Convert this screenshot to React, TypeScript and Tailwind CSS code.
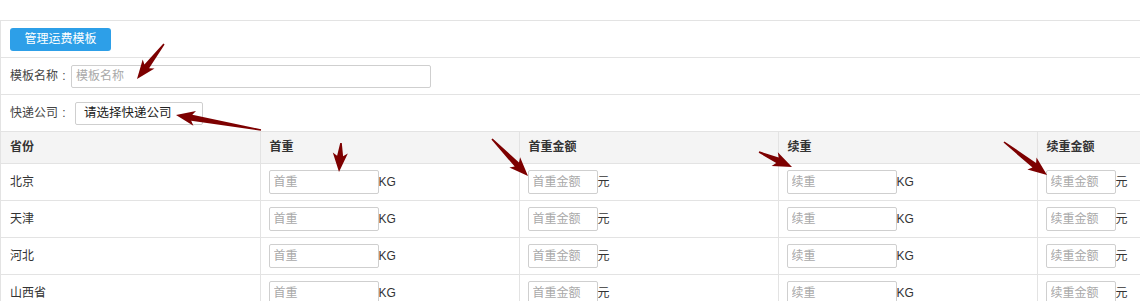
const font = { fontFamily: '"Liberation Sans", "Noto Sans CJK SC", sans-serif' };

const provinces = ["北京", "天津", "河北", "山西省"];

type Arrow = [number, number, number, number];

const arrows: Arrow[] = [
  [164, 44, 137, 79],
  [261, 130, 176, 115],
  [341, 143, 339, 172],
  [492, 139, 528, 176],
  [759, 152, 792, 167],
  [1004, 142, 1047, 175],
];

function arrowPoints([x1, y1, x2, y2]: Arrow) {
  const dx = x2 - x1;
  const dy = y2 - y1;
  const len = Math.hypot(dx, dy);
  const ux = dx / len;
  const uy = dy / len;
  const nx = -uy;
  const ny = ux;
  const headLen = 16;
  const headW = 15;
  const shaftW = 6;
  const bx = x2 - ux * headLen;
  const by = y2 - uy * headLen;
  const pts = [
    [x1 + nx * 0.8, y1 + ny * 0.8],
    [bx + nx * (shaftW / 2), by + ny * (shaftW / 2)],
    [bx - ux * 3 + nx * (headW / 2), by - uy * 3 + ny * (headW / 2)],
    [x2, y2],
    [bx - ux * 3 - nx * (headW / 2), by - uy * 3 - ny * (headW / 2)],
    [bx - nx * (shaftW / 2), by - ny * (shaftW / 2)],
    [x1 - nx * 0.8, y1 - ny * 0.8],
  ];
  return pts.map((p) => p.map((v) => v.toFixed(1)).join(",")).join(" ");
}

function CellInput({ placeholder, width, unit }: { placeholder: string; width: string; unit: string }) {
  return (
    <div className="flex items-center -ml-[1px]">
      <input
        placeholder={placeholder}
        className={`${width} h-[24px] border border-[#cfcfcf] rounded-[2px] pl-[4px] text-[12px] text-[#333] placeholder:text-[#a9a9a9] outline-none`}
        style={font}
      />
      <span className="text-[12px] text-[#333]">{unit}</span>
    </div>
  );
}

export default function App() {
  return (
    <div className="relative w-[1140px] h-[301px] overflow-hidden bg-white text-[#333]" style={font}>
      <div className="mt-[20px] w-[1300px] border-t border-l border-[#e3e3e3]">
        {/* toolbar */}
        <div className="h-[37px] flex items-center pl-[9px] border-b border-[#e3e3e3]">
          <button className="w-[101px] h-[23px] rounded-[3px] bg-[#2d9fe8] text-white text-[12px]">
            管理运费模板
          </button>
        </div>

        {/* 模板名称 */}
        <div className="h-[37px] flex items-center pl-[9px] border-b border-[#e3e3e3]">
          <span className="text-[12px] text-[#444]">模板名称</span>
          <span className="text-[12px] w-[12px] text-center text-[#444] mr-[1px]">:</span>
          <input
            placeholder="模板名称"
            className="w-[360px] h-[23px] border border-[#cfcfcf] rounded-[2px] pl-[4px] text-[12px] placeholder:text-[#a9a9a9] outline-none"
            style={font}
          />
        </div>

        {/* 快递公司 */}
        <div className="h-[37px] flex items-center pl-[9px] border-b border-[#e3e3e3]">
          <span className="text-[12px] text-[#444]">快递公司</span>
          <span className="text-[12px] w-[12px] text-center text-[#444] mr-[5px]">:</span>
          <div className="w-[128px] h-[23px] border border-[#cfcfcf] rounded-[2px] pl-[8px] flex items-center text-[12.5px] text-[#222]">
            请选择快递公司
          </div>
        </div>

        {/* table */}
        <table className="table-fixed border-collapse w-[1295px]">
          <colgroup>
            <col className="w-[259px]" />
            <col className="w-[259px]" />
            <col className="w-[259px]" />
            <col className="w-[259px]" />
            <col className="w-[259px]" />
          </colgroup>
          <thead>
            <tr className="h-[31px] bg-[#f4f4f4] text-left text-[12px] font-bold text-[#333]">
              <th className="pl-[9px] border-b border-r border-[#e3e3e3]">省份</th>
              <th className="pl-[9px] border-b border-r border-[#e3e3e3]">首重</th>
              <th className="pl-[9px] border-b border-r border-[#e3e3e3]">首重金额</th>
              <th className="pl-[9px] border-b border-r border-[#e3e3e3]">续重</th>
              <th className="pl-[9px] border-b border-r border-[#e3e3e3]">续重金额</th>
            </tr>
          </thead>
          <tbody>
            {provinces.map((p) => (
              <tr key={p} className="h-[37px] text-[12px]">
                <td className="pl-[9px] border-b border-r border-[#e3e3e3]">{p}</td>
                <td className="pl-[9px] border-b border-r border-[#e3e3e3]">
                  <CellInput placeholder="首重" width="w-[110px]" unit="KG" />
                </td>
                <td className="pl-[9px] border-b border-r border-[#e3e3e3]">
                  <CellInput placeholder="首重金额" width="w-[70px]" unit="元" />
                </td>
                <td className="pl-[9px] border-b border-r border-[#e3e3e3]">
                  <CellInput placeholder="续重" width="w-[110px]" unit="KG" />
                </td>
                <td className="pl-[9px] border-b border-r border-[#e3e3e3]">
                  <CellInput placeholder="续重金额" width="w-[70px]" unit="元" />
                </td>
              </tr>
            ))}
          </tbody>
        </table>
      </div>

      {/* annotation arrows */}
      <svg className="absolute inset-0 pointer-events-none" width="1140" height="301">
        {arrows.map((a, i) => (
          <polygon key={i} points={arrowPoints(a)} fill="#7d0000" />
        ))}
      </svg>
    </div>
  );
}
